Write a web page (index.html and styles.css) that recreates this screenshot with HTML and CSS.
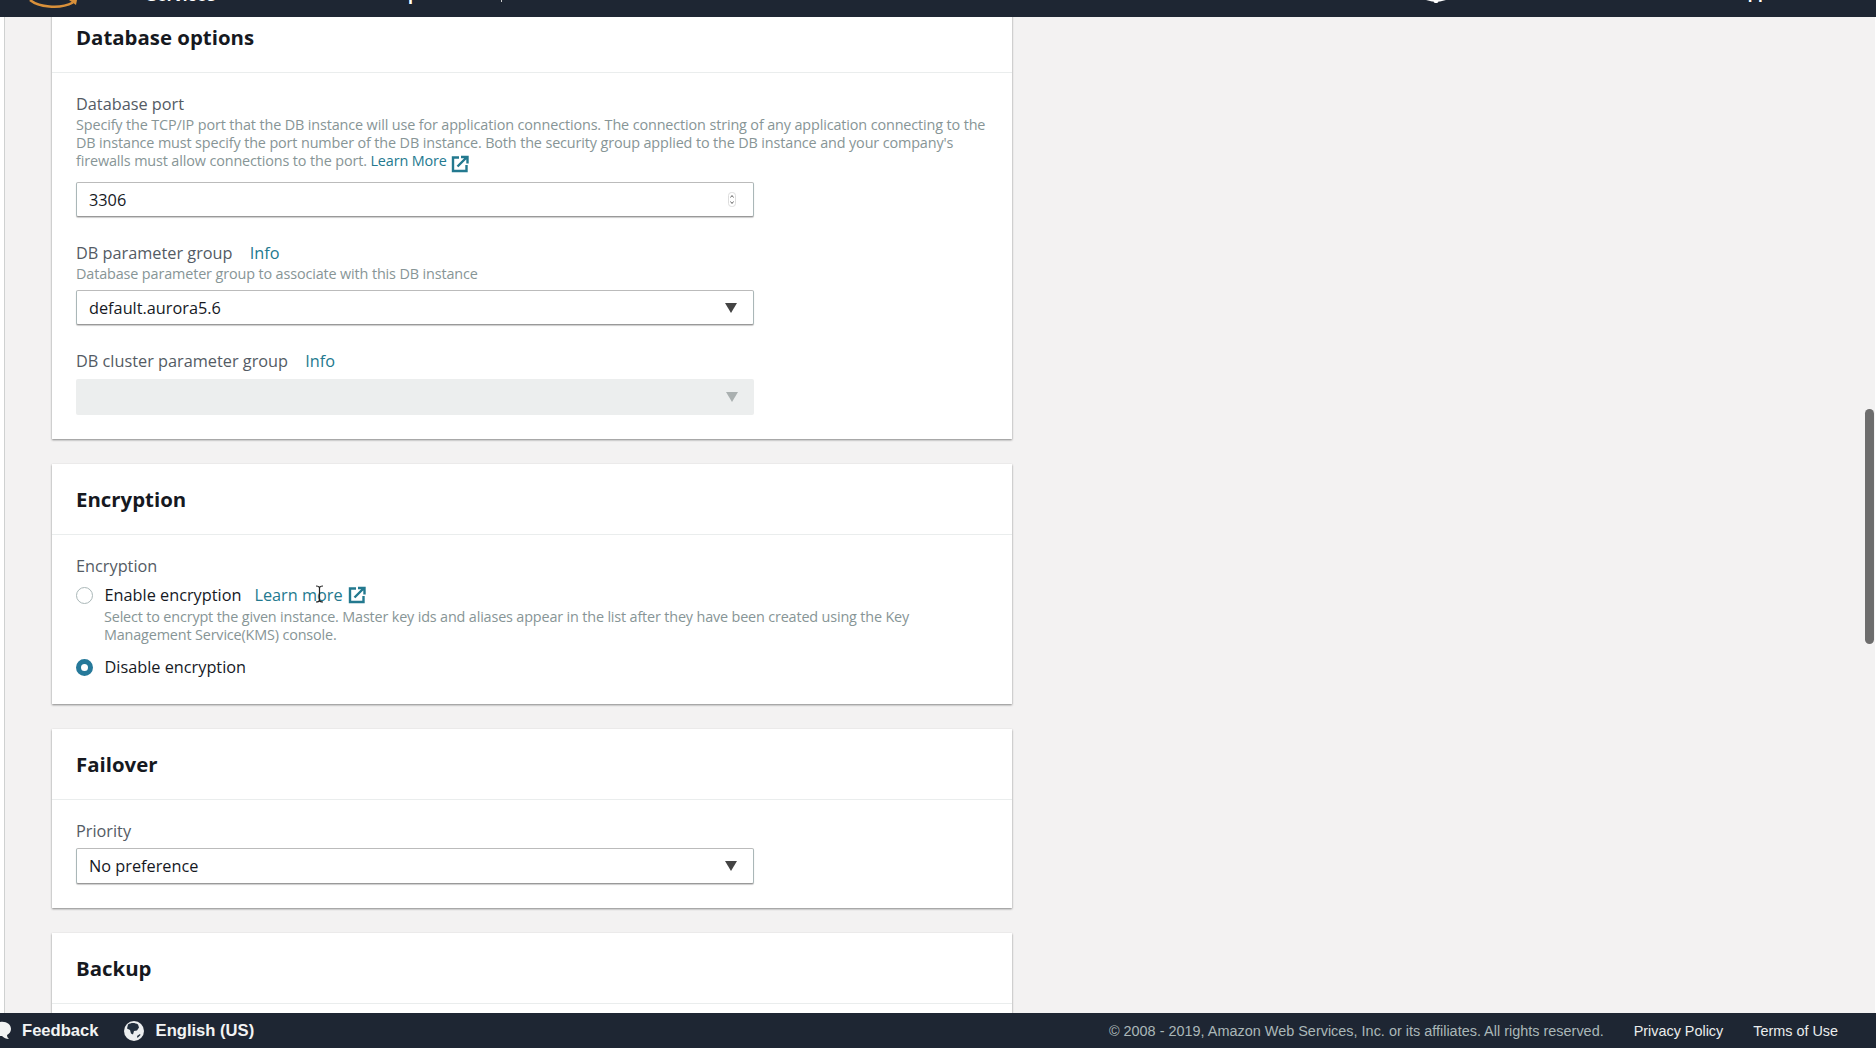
FILE: index.html
```html
<!DOCTYPE html>
<html lang="en">
<head>
<meta charset="utf-8">
<title>Create database</title>
<link rel="stylesheet" href="styles.css">
</head>
<body>
<svg class="sprite" width="0" height="0" aria-hidden="true">
  <symbol id="ext" viewBox="0 0 18 18">
    <path d="M8 2.500H2v13.500h13.500V10" fill="none" stroke="currentColor" stroke-width="2.400"/>
    <path d="M6.500 11.500 15 3M10 2h6.500v6.500" fill="none" stroke="currentColor" stroke-width="2.400"/>
  </symbol>
</svg>
<header class="topbar">
  <svg class="logo" width="50" height="10" viewBox="0 0 50 10"><path d="M1 0C9 6.500 30 10 44 2.500" fill="none" stroke="#d9903a" stroke-width="2.500"/><path d="M40 0h8l-1 5" fill="#d9903a"/></svg>
  <span class="nav nav-services">Services</span>
  <span class="nav nav-groups">Resource Groups</span>
  <span class="nav-pin"></span>
  <svg class="bell" width="20" height="4" viewBox="0 0 20 4"><path d="M0 0h20l-6 1.500h-1.500C12 3.500 8 3.500 7.500 1.500H6z" fill="#fff"/></svg>
  <span class="nav nav-support">Support</span>
</header>
<div class="shell">
  <main class="content">
    <section class="card card-first">
      <h2 class="card-head">Database options</h2>
      <div class="card-body">
        <div class="label">Database port</div>
        <p class="desc">Specify the TCP/IP port that the DB instance will use for application connections. The connection string of any application connecting to the<br>DB instance must specify the port number of the DB instance. Both the security group applied to the DB instance and your company's<br>firewalls must allow connections to the port. <a class="link">Learn More</a> <svg class="ext ext-sm"><use href="#ext"/></svg></p>
        <div class="control control-port">
          <span class="value">3306</span>
          <svg class="spin" width="8" height="15" viewBox="0 0 8 15"><rect x=".5" y=".5" width="7" height="14" rx="3" fill="#fff" stroke="#ddd"/><path d="M2.500 5.500 4 3.500l1.500 2M2.500 9.500 4 11.500l1.500-2" fill="none" stroke="#666"/></svg>
        </div>
        <div class="label label-next">DB parameter group <a class="link info">Info</a></div>
        <p class="desc desc-tight">Database parameter group to associate with this DB instance</p>
        <div class="control">
          <span class="value">default.aurora5.6</span>
          <span class="caret"></span>
        </div>
        <div class="label label-next">DB cluster parameter group <a class="link info">Info</a></div>
        <div class="control control-disabled"><span class="caret caret-muted"></span></div>
      </div>
    </section>

    <section class="card">
      <h2 class="card-head">Encryption</h2>
      <div class="card-body card-body-enc">
        <div class="label">Encryption</div>
        <div class="radio-row radio-first">
          <span class="radio"></span>
          <span class="radio-text">Enable encryption</span>
          <a class="link learn">Learn more</a>
          <svg class="ext"><use href="#ext"/></svg>
          <svg class="ibeam" width="9" height="18" viewBox="0 0 9 18"><path d="M1 1c2 0 3.500.5 3.500 2v12c0 1.500-1.500 2-3.500 2M8 1c-2 0-3.500.5-3.500 2v12c0 1.500 1.500 2 3.500 2" fill="none" stroke="#222" stroke-width="1.200"/></svg>
        </div>
        <p class="desc desc-indent">Select to encrypt the given instance. Master key ids and aliases appear in the list after they have been created using the Key<br>Management Service(KMS) console.</p>
        <div class="radio-row radio-last">
          <span class="radio radio-on"></span>
          <span class="radio-text">Disable encryption</span>
        </div>
      </div>
    </section>

    <section class="card">
      <h2 class="card-head">Failover</h2>
      <div class="card-body card-body-fail">
        <div class="label">Priority</div>
        <div class="control control-priority">
          <span class="value">No preference</span>
          <span class="caret"></span>
        </div>
      </div>
    </section>

    <section class="card">
      <h2 class="card-head">Backup</h2>
      <div class="card-body"></div>
    </section>
  </main>
  <div class="scroll-thumb"></div>
</div>
<footer class="footer">
  <svg class="bubble" width="11" height="20" viewBox="0 0 11 20"><path d="M0 1c6-1 11 2 11 7 0 3-2 5-4 6 0 2 1 3 2 4-3 0-5-1-7-3l-2 0z" fill="#f2f3f3"/></svg>
  <span class="foot-strong feedback">Feedback</span>
  <svg class="globe" width="20" height="20" viewBox="0 0 20 20"><circle cx="10" cy="10" r="10" fill="#eceeef"/><path d="M4 3.500c3-2 7-2 10 0l1 3-2 3-3 .5-1 3.500-2-1-1-3.500-3-1.500zM13 15l3-2 .5 1-3 3z" fill="#232f3e"/></svg>
  <span class="foot-strong lang">English (US)</span>
  <span class="copyright">© 2008 - 2019, Amazon Web Services, Inc. or its affiliates. All rights reserved.</span>
  <a class="foot-link">Privacy Policy</a>
  <a class="foot-link foot-link-last">Terms of Use</a>
</footer>
</body>
</html>
```

FILE: styles.css
```css
* { box-sizing: border-box; }
html, body { height: 100%; }
body {
  margin: 0;
  height: 100vh;
  display: flex;
  flex-direction: column;
  overflow: hidden;
  background: #fff;
  color: #444b4b;
  font-family: "Open Sans", "Noto Sans", sans-serif;
}
.sprite { position: absolute; }

/* top bar, scrolled mostly out of frame */
.topbar {
  flex: 0 0 17px;
  display: flex;
  align-items: flex-start;
  background: #1e2633;
  overflow: hidden;
  font-family: "Liberation Sans", sans-serif;
}
.logo { margin-left: 29px; flex: none; }
.nav {
  margin-top: -16px;
  line-height: 24px;
  font-size: 17px;
  font-weight: 700;
  color: #fff;
  white-space: nowrap;
}
.nav-services { margin-left: 67px; }
.nav-groups { margin-left: 62px; margin-top: -18px; font-size: 18px; }
.nav-pin { width: 1px; height: 2px; background: #ccc; margin-left: 72px; }
.bell { margin-left: 924px; flex: none; }
.nav-support { margin-left: 280px; margin-top: -18px; }

/* scroll area */
.shell {
  flex: 1;
  min-height: 0;
  position: relative;
  margin: 0 1px 0 4px;
  border-left: 1px solid #cfd1d1;
  background: #f3f2f2;
  overflow: hidden;
  padding-left: 47px;
}
.content {
  width: 960px;
  display: flex;
  flex-direction: column;
  gap: 25px;
}
.card {
  background: #fff;
  box-shadow: 0 1px 2px rgba(0,0,0,.45);
}
.card-first { margin-top: -15px; }
.card-head {
  margin: 0;
  height: 71px;
  padding: 0 24px;
  border-bottom: 1px solid #eaeded;
  font-size: 20.400px;
  line-height: 71px;
  font-weight: 700;
  color: #16191f;
}
.card-body { padding: 20px 24px 24px; }
.card-body-enc { padding: 20px 24px 26px; }
.card-body-fail { padding: 20px 24px 24px; }

.label {
  font-size: 16.300px;
  line-height: 22px;
  color: #545b64;
}
.label-next { margin-top: 25px; }
.link { color: #23798f; }
.info { margin-left: 13px; }
.desc {
  margin: 1px 0 0;
  font-size: 14.400px;
  letter-spacing: -.13px;
  line-height: 18px;
  color: #879596;
  white-space: nowrap;
}
.desc-tight { margin-top: 1px; }
.desc-indent { margin-left: 28px; margin-top: 2px; letter-spacing: -.16px; }
.ext { width: 18px; height: 18px; color: #23798f; flex: none; }
.ext-sm { margin: -5px 0 -5px 1px; vertical-align: -2px; }

.control {
  height: 35px;
  margin-top: 7px;
  display: flex;
  align-items: center;
  justify-content: space-between;
  width: 678px;
  padding: 0 16px 0 12px;
  background: #fff;
  border: 1px solid #aab7b8;
  border-top-color: #bbb;
  border-bottom-color: #999;
  border-radius: 2px;
  box-shadow: 0 1px 1px rgba(0,0,0,.2);
}
.control-port { margin-top: 12px; padding-right: 17px; }
.control-disabled {
  height: 36px;
  border: 0;
  box-shadow: none;
  background: #eceeee;
  justify-content: flex-end;
}
.control-priority { height: 36px; margin-top: 6px; }
.value { font-size: 16.300px; color: #16191f; }
.caret {
  width: 0;
  height: 0;
  border-left: 6.500px solid transparent;
  border-right: 6.500px solid transparent;
  border-top: 10px solid #444;
}
.caret-muted { border-top-color: #aab0b0; }

.radio-row {
  position: relative;
  display: flex;
  align-items: center;
  height: 22px;
}
.radio-first { margin-top: 7px; }
.radio-last { margin-top: 12px; }
.radio {
  width: 17px;
  height: 17px;
  flex: none;
  border-radius: 50%;
  border: 1.500px solid #aab7b8;
  background: #fff;
  margin-right: 11.500px;
}
.radio-on {
  border: 5px solid #26799a;
}
.radio-text { font-size: 16.300px; color: #16191f; }
.learn { font-size: 16.300px; margin: 0 5px 0 13px; }
.ibeam {
  position: absolute;
  left: 239px;
  top: 1px;
}

/* footer */
.footer {
  flex: 0 0 35px;
  display: flex;
  align-items: center;
  background: #1e2633;
  color: #fff;
  font-family: "Liberation Sans", sans-serif;
  overflow: hidden;
}
.bubble { flex: none; }
.foot-strong { font-size: 16.600px; font-weight: 700; color: #f2f3f3; }
.feedback { margin-left: 11px; }
.globe { margin-left: 25px; flex: none; }
.lang { margin-left: 12px; }
.copyright { margin-left: auto; font-size: 14.450px; color: #aab7b8; }
.foot-link { margin-left: 30px; font-size: 14.400px; color: #eaeded; }
.foot-link-last { margin-right: 38px; }

.scroll-thumb {
  position: absolute;
  top: 392px;
  right: 1px;
  width: 9px;
  height: 235px;
  border-radius: 5px;
  background: #6d6d6d;
}
```
